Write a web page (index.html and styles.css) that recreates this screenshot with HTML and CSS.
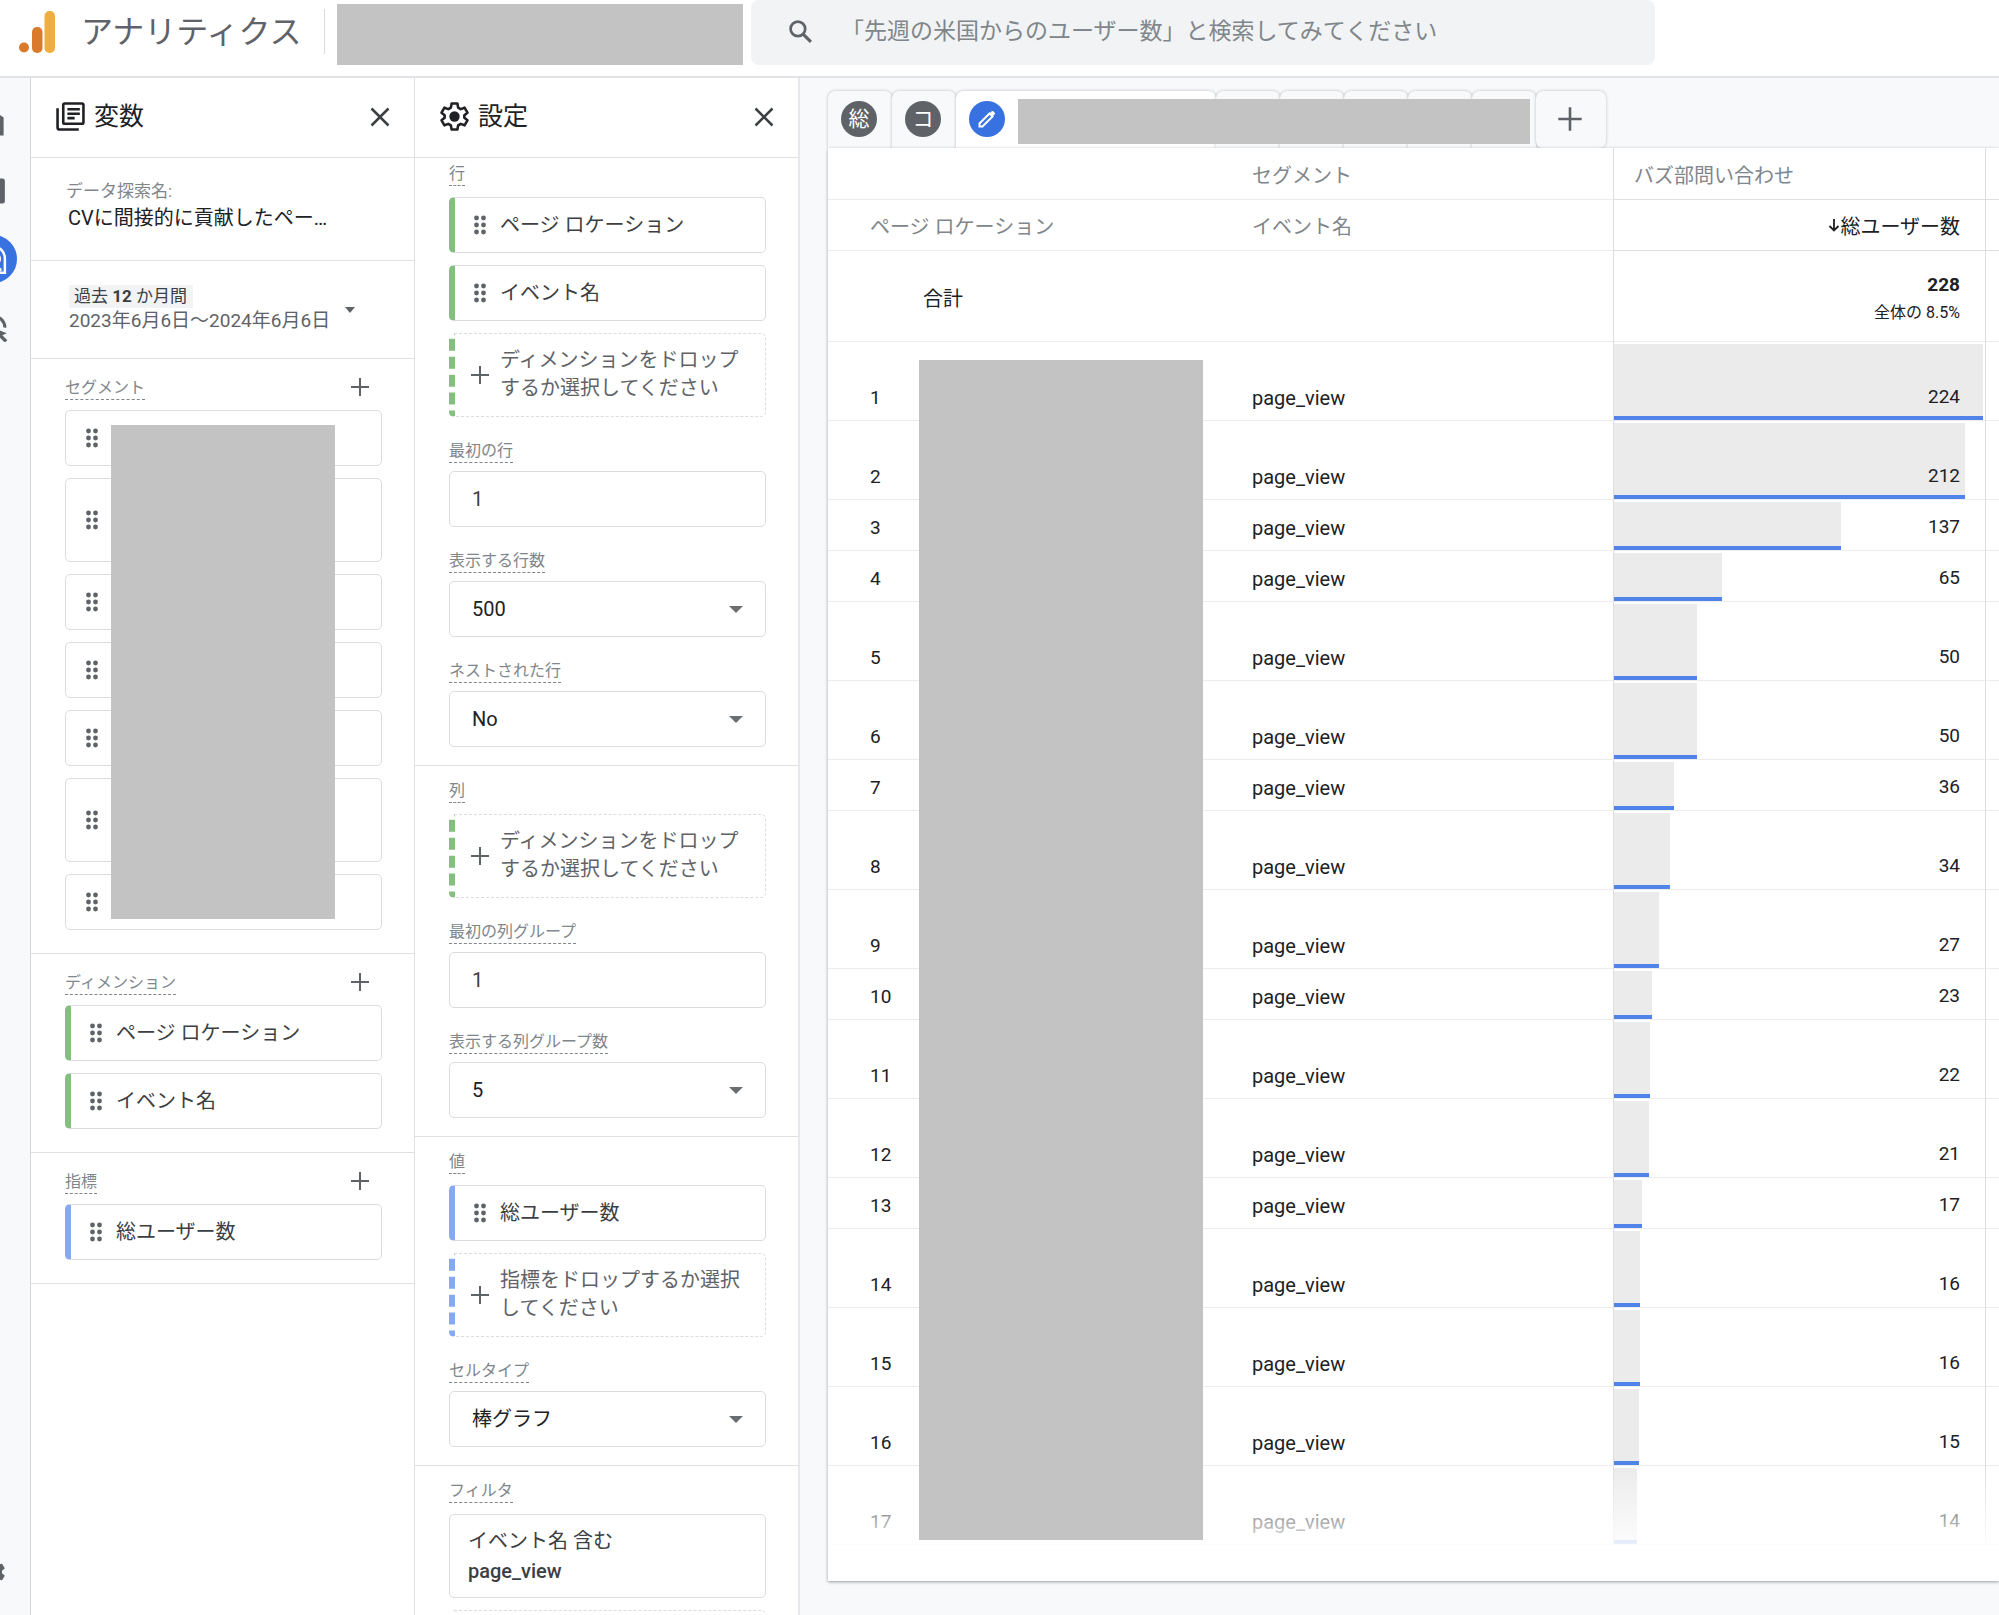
FILE: index.html
```html
<!DOCTYPE html>
<html lang="ja">
<head>
<meta charset="utf-8">
<title>アナリティクス</title>
<link rel="stylesheet" href="styles.css">
</head>
<body>
<svg class="sprite" aria-hidden="true">
  <symbol id="grip" viewBox="0 0 12 20"><g fill="#5f6368"><circle cx="2.5" cy="3" r="2.4"/><circle cx="9.5" cy="3" r="2.4"/><circle cx="2.5" cy="10" r="2.4"/><circle cx="9.5" cy="10" r="2.4"/><circle cx="2.5" cy="17" r="2.4"/><circle cx="9.5" cy="17" r="2.4"/></g></symbol>
  <symbol id="plus" viewBox="0 0 20 20"><path d="M10 1v18M1 10h18" stroke="#5f6368" stroke-width="2" fill="none"/></symbol>
  <symbol id="close" viewBox="0 0 20 20"><path d="M1.500 1.500l17 17M18.500 1.500l-17 17" stroke="#3c4043" stroke-width="2.500" fill="none"/></symbol>
</svg>

<header class="topbar">
  <svg class="logo" viewBox="0 0 36 42" aria-hidden="true"><circle cx="5" cy="36.500" r="5" fill="#d97b2b"/><rect x="13" y="16" width="10.500" height="26" rx="5" fill="#d97b2b"/><rect x="25.500" width="10.500" height="42" rx="5" fill="#efae3f"/></svg>
  <span class="brand">アナリティクス</span>
  <span class="divider"></span>
  <span class="account"></span>
  <label class="search">
    <svg viewBox="0 0 24 24" aria-hidden="true"><circle cx="9.500" cy="9.500" r="7" fill="none" stroke="#5f6368" stroke-width="2.600"/><path d="M14.500 14.500l7.500 7.500" stroke="#5f6368" stroke-width="3"/></svg>
    <input type="text" aria-label="検索" placeholder="「先週の米国からのユーザー数」と検索してみてください">
  </label>
</header>

<div class="workspace">
  <nav class="rail">
    <a href="#" aria-label="ホーム"><svg viewBox="0 0 24 24"><path d="M3 22V8l9-6 8.500 5.500V22h-6v-7h-5v7z"/></svg></a>
    <a href="#" aria-label="レポート"><svg viewBox="0 0 24 24"><rect x="2" y="2" width="19.500" height="20" rx="2"/></svg></a>
    <a href="#" class="current" aria-label="探索"><svg viewBox="0 0 24 24"><path d="M12 2a9.500 9.500 0 0 1 9.500 9.500V23h-4" fill="none" stroke="#fff" stroke-width="2"/><path d="M12 6a6 6 0 0 1 5 8" fill="none" stroke="#fff" stroke-width="2"/><circle cx="17.500" cy="20.500" r="1.500" fill="#fff"/></svg></a>
    <a href="#" aria-label="広告"><svg viewBox="0 0 24 24"><path d="M12 3.500a9 9 0 0 1 9.500 9" fill="none" stroke="#5f6368" stroke-width="2.500"/><path d="M13 13l10 4-3.500 1.500 4 4-2 2-4-4L16 23z"/></svg></a>
    <a href="#" class="admin" aria-label="管理"><svg viewBox="0 0 24 24"><path d="M19.140 12.940c.04-.3.060-.61.060-.94s-.02-.64-.07-.94l2.030-1.580a.49.49 0 0 0 .12-.61l-1.920-3.320a.49.49 0 0 0-.59-.22l-2.390.96a7 7 0 0 0-1.620-.94l-.36-2.540A.48.48 0 0 0 13.920 2h-3.840a.48.48 0 0 0-.47.410l-.36 2.540c-.59.240-1.130.570-1.620.940l-2.390-.96a.48.48 0 0 0-.59.220L2.740 8.870a.48.48 0 0 0 .12.610l2.030 1.580a7 7 0 0 0 0 1.880l-2.030 1.580a.49.49 0 0 0-.12.610l1.920 3.320c.12.220.370.290.590.220l2.390-.96c.5.380 1.030.7 1.620.940l.36 2.540c.05.240.24.410.48.410h3.840c.24 0 .44-.17.470-.41l.36-2.540a7 7 0 0 0 1.620-.94l2.390.96c.22.080.47 0 .59-.22l1.920-3.320a.48.48 0 0 0-.12-.61z"/></svg></a>
  </nav>

  <aside class="panel">
    <div class="panel-head">
      <svg class="head-icon" viewBox="0 0 28 28" aria-hidden="true"><g fill="none" stroke="#202124" stroke-width="2.500"><rect x="7" y="1.500" width="19.500" height="19.500" rx="1.500"/><path d="M1.500 6v18.500a2 2 0 0 0 2 2H22"/><path d="M11 7h12M11 11.300h12M11 15.600h7"/></g></svg>
      <h2>変数</h2>
      <button class="icon-btn" aria-label="変数を閉じる"><svg><use href="#close"/></svg></button>
    </div>
    <div class="name-block">
      <span class="name-label">データ探索名:</span>
      <span class="name-value">CVに間接的に貢献したペー…</span>
    </div>
    <button class="date-block">
      <span><span class="badge">過去 <b>12</b> か月間</span><span class="dates">2023年6月6日～2024年6月6日</span></span>
      <span class="caret"></span>
    </button>
    <section class="group">
      <div class="group-head"><span class="tip">セグメント</span><button class="icon-btn" aria-label="セグメントを追加"><svg><use href="#plus"/></svg></button></div>
      <div class="chips segments">
        <div class="chip"><svg><use href="#grip"/></svg></div>
        <div class="chip tall"><svg><use href="#grip"/></svg></div>
        <div class="chip"><svg><use href="#grip"/></svg></div>
        <div class="chip"><svg><use href="#grip"/></svg></div>
        <div class="chip"><svg><use href="#grip"/></svg></div>
        <div class="chip tall"><svg><use href="#grip"/></svg></div>
        <div class="chip"><svg><use href="#grip"/></svg></div>
        <div class="mask"></div>
      </div>
    </section>
    <section class="group">
      <div class="group-head"><span class="tip">ディメンション</span><button class="icon-btn" aria-label="ディメンションを追加"><svg><use href="#plus"/></svg></button></div>
      <div class="chips">
        <div class="chip dim"><svg><use href="#grip"/></svg>ページ ロケーション</div>
        <div class="chip dim"><svg><use href="#grip"/></svg>イベント名</div>
      </div>
    </section>
    <section class="group">
      <div class="group-head"><span class="tip">指標</span><button class="icon-btn" aria-label="指標を追加"><svg><use href="#plus"/></svg></button></div>
      <div class="chips">
        <div class="chip metric"><svg><use href="#grip"/></svg>総ユーザー数</div>
      </div>
    </section>
  </aside>

  <aside class="panel settings">
    <div class="panel-head">
      <svg class="head-icon" viewBox="0 0 28 28" aria-hidden="true"><path d="M11.200 1.500h5.600l.7 3.900 2.500 1.500 3.700-1.400 2.800 4.800-3 2.500v2.400l3 2.500-2.800 4.800-3.700-1.400-2.500 1.500-.7 3.900h-5.600l-.7-3.900L8 21.100l-3.700 1.400-2.800-4.800 3-2.500v-2.400l-3-2.500 2.800-4.800L8 6.900l2.500-1.500z" fill="none" stroke="#202124" stroke-width="2.500" stroke-linejoin="round"/><circle cx="14" cy="14" r="5" fill="#202124"/></svg>
      <h2>設定</h2>
      <button class="icon-btn" aria-label="設定を閉じる"><svg><use href="#close"/></svg></button>
    </div>
    <section class="group">
      <div class="set-head"><span class="tip">行</span></div>
      <div class="chips">
        <div class="chip dim"><svg><use href="#grip"/></svg>ページ ロケーション</div>
        <div class="chip dim"><svg><use href="#grip"/></svg>イベント名</div>
        <button class="drop dim"><svg><use href="#plus"/></svg><span>ディメンションをドロップするか選択してください</span></button>
      </div>
      <div class="field-label"><label class="tip" for="first-row">最初の行</label></div>
      <input class="box" id="first-row" type="text" value="1">
      <div class="field-label"><label class="tip" for="row-count">表示する行数</label></div>
      <div class="select"><select class="box" id="row-count"><option>500</option></select></div>
      <div class="field-label"><label class="tip" for="nested">ネストされた行</label></div>
      <div class="select"><select class="box" id="nested"><option>No</option></select></div>
    </section>
    <section class="group">
      <div class="set-head"><span class="tip">列</span></div>
      <button class="drop dim"><svg><use href="#plus"/></svg><span>ディメンションをドロップするか選択してください</span></button>
      <div class="field-label"><label class="tip" for="first-col">最初の列グループ</label></div>
      <input class="box" id="first-col" type="text" value="1">
      <div class="field-label"><label class="tip" for="col-count">表示する列グループ数</label></div>
      <div class="select"><select class="box" id="col-count"><option>5</option></select></div>
    </section>
    <section class="group">
      <div class="set-head"><span class="tip">値</span></div>
      <div class="chips">
        <div class="chip metric"><svg><use href="#grip"/></svg>総ユーザー数</div>
        <button class="drop metric"><svg><use href="#plus"/></svg><span>指標をドロップするか選択してください</span></button>
      </div>
      <div class="field-label"><label class="tip" for="cell-type">セルタイプ</label></div>
      <div class="select"><select class="box" id="cell-type"><option>棒グラフ</option></select></div>
    </section>
    <section class="group">
      <div class="set-head"><span class="tip">フィルタ</span></div>
      <div class="chips">
        <button class="filter">イベント名 含む<b>page_view</b></button>
        <button class="drop" aria-label="フィルタを追加"></button>
      </div>
    </section>
  </aside>

  <main class="canvas">
    <div class="tabs">
      <button class="tab"><span class="dot">総</span></button>
      <button class="tab"><span class="dot">コ</span></button>
      <button class="tab active" aria-label="編集中のタブ"><span class="dot"><svg viewBox="0 0 20 20"><path d="M2.500 17.500v-3L12.500 4.500l3 3-10 10z" fill="none" stroke="#fff" stroke-width="2"/><path d="M13 4l1.700-1.700q.8-.8 1.600 0l1.400 1.400q.8.800 0 1.600L16 7z" fill="#fff"/></svg></span></button>
      <button class="tab" aria-label="タブ 4"></button>
      <button class="tab" aria-label="タブ 5"></button>
      <button class="tab" aria-label="タブ 6"></button>
      <button class="tab" aria-label="タブ 7"></button>
      <button class="tab" aria-label="タブ 8"></button>
      <button class="tab add" aria-label="タブを追加"><svg><use href="#plus"/></svg></button>
      <div class="mask"></div>
    </div>
    <div class="report">
      <div class="table-wrap">
        <table>
          <colgroup><col class="c-no"><col class="c-page"><col class="c-event"><col class="c-users"><col></colgroup>
          <thead>
            <tr><th colspan="2"></th><th>セグメント</th><th class="seg">バズ部問い合わせ</th><th class="seg"></th></tr>
            <tr><th colspan="2" class="first">ページ ロケーション</th><th>イベント名</th><th class="seg sorted"><svg viewBox="0 0 12 16" aria-hidden="true"><path d="M6 1v11M1.500 8L6 12.500 10.500 8" fill="none" stroke="#202124" stroke-width="1.800"/></svg>総ユーザー数</th><th class="seg"></th></tr>
          </thead>
          <tbody>
            <tr class="total"><td></td><td>合計</td><td></td><td class="num"><b>228</b><small>全体の 8.5%</small></td><td class="num"></td></tr>
            <tr class="tall"><td>1</td><td></td><td class="event">page_view</td><td class="num"><i style="width:100%"></i><span>224</span></td><td class="num"></td></tr>
            <tr class="tall"><td>2</td><td></td><td class="event">page_view</td><td class="num"><i style="width:94.6%"></i><span>212</span></td><td class="num"></td></tr>
            <tr><td>3</td><td></td><td class="event">page_view</td><td class="num"><i style="width:61.2%"></i><span>137</span></td><td class="num"></td></tr>
            <tr><td>4</td><td></td><td class="event">page_view</td><td class="num"><i style="width:29%"></i><span>65</span></td><td class="num"></td></tr>
            <tr class="tall"><td>5</td><td></td><td class="event">page_view</td><td class="num"><i style="width:22.3%"></i><span>50</span></td><td class="num"></td></tr>
            <tr class="tall"><td>6</td><td></td><td class="event">page_view</td><td class="num"><i style="width:22.3%"></i><span>50</span></td><td class="num"></td></tr>
            <tr><td>7</td><td></td><td class="event">page_view</td><td class="num"><i style="width:16.1%"></i><span>36</span></td><td class="num"></td></tr>
            <tr class="tall"><td>8</td><td></td><td class="event">page_view</td><td class="num"><i style="width:15.2%"></i><span>34</span></td><td class="num"></td></tr>
            <tr class="tall"><td>9</td><td></td><td class="event">page_view</td><td class="num"><i style="width:12.1%"></i><span>27</span></td><td class="num"></td></tr>
            <tr><td>10</td><td></td><td class="event">page_view</td><td class="num"><i style="width:10.3%"></i><span>23</span></td><td class="num"></td></tr>
            <tr class="tall"><td>11</td><td></td><td class="event">page_view</td><td class="num"><i style="width:9.8%"></i><span>22</span></td><td class="num"></td></tr>
            <tr class="tall"><td>12</td><td></td><td class="event">page_view</td><td class="num"><i style="width:9.4%"></i><span>21</span></td><td class="num"></td></tr>
            <tr><td>13</td><td></td><td class="event">page_view</td><td class="num"><i style="width:7.6%"></i><span>17</span></td><td class="num"></td></tr>
            <tr class="tall"><td>14</td><td></td><td class="event">page_view</td><td class="num"><i style="width:7.1%"></i><span>16</span></td><td class="num"></td></tr>
            <tr class="tall"><td>15</td><td></td><td class="event">page_view</td><td class="num"><i style="width:7.1%"></i><span>16</span></td><td class="num"></td></tr>
            <tr class="tall"><td>16</td><td></td><td class="event">page_view</td><td class="num"><i style="width:6.7%"></i><span>15</span></td><td class="num"></td></tr>
            <tr class="tall"><td>17</td><td></td><td class="event">page_view</td><td class="num"><i style="width:6.3%"></i><span>14</span></td><td class="num"></td></tr>
          </tbody>
        </table>
        <div class="fade"></div>
        <div class="mask"></div>
      </div>
    </div>
  </main>
</div>
</body>
</html>
```

FILE: styles.css
```css
* { box-sizing: border-box; }

body {
  margin: 0;
  height: 100vh;
  display: flex;
  flex-direction: column;
  overflow: hidden;
  background: #fff;
  color: #3c4043;
  font: 20px/28px Roboto, "Noto Sans CJK JP", sans-serif;
}

button, input, select { font: inherit; color: inherit; }
button { background: none; border: 0; padding: 0; text-align: left; cursor: pointer; }
.sprite { display: none; }
.mask { position: absolute; background: #c3c3c3; }

/* top bar */
.topbar {
  flex: none;
  height: 78px;
  display: flex;
  align-items: flex-start;
  border-bottom: 2px solid #e1e3e6;
  padding-left: 19px;
}
.logo { width: 36px; height: 42px; margin-top: 11px; }
.brand { margin: 10px 0 0 26px; width: 243px; font-size: 32px; line-height: 44px; color: #5f6368; white-space: nowrap; }
.divider { width: 1px; height: 45px; margin-top: 9px; background: #dadce0; }
.account { width: 406px; height: 61px; margin: 4px 0 0 12px; background: #c3c3c3; }
.search {
  flex: 0 1 904px;
  height: 65px;
  margin-left: 8px;
  padding: 0 24px 2px 37px;
  display: flex;
  align-items: center;
  gap: 28px;
  border-radius: 8px;
  background: #f1f3f4;
}
.search svg { width: 25px; height: 25px; flex: none; }
.search input { flex: 1; min-width: 0; height: 40px; padding: 0; border: 0; outline: 0; background: none; font-size: 23px; }
.search input::placeholder { color: #80868b; opacity: 1; }

.workspace { flex: 1; min-height: 0; display: flex; }

/* left navigation */
.rail {
  flex: none;
  width: 31px;
  padding: 21px 0 19px;
  display: flex;
  flex-direction: column;
  gap: 20px;
  overflow: hidden;
  background: #f8f9fb;
  border-right: 1px solid #d5d8db;
}
.rail a { flex: none; width: 48px; height: 48px; margin-left: -31px; border-radius: 50%; display: flex; align-items: center; justify-content: center; }
.rail svg { width: 30px; height: 30px; fill: #5f6368; }
.rail .current { background: #3871e0; }
.rail .admin { margin-top: auto; }

/* panels */
.panel { flex: none; width: 384px; overflow: hidden; border-right: 1px solid #dfe1e4; }
.panel.settings { width: 385px; border-right: 2px solid #e6e8eb; }
.panel-head { height: 80px; display: flex; align-items: center; padding: 0 24px 2px 25px; border-bottom: 1px solid #e0e0e0; }
.head-icon { width: 29px; height: 29px; }
.panel-head h2 { flex: 1; margin: 0 0 0 9px; font-size: 25px; line-height: 36px; font-weight: 400; color: #202124; }
.icon-btn { width: 20px; height: 20px; display: block; }
.icon-btn svg { width: 20px; height: 20px; display: block; }

.name-block { height: 103px; padding: 21px 34px 0 35px; display: flex; flex-direction: column; border-bottom: 1px solid #e0e0e0; }
.name-label { font-size: 17px; line-height: 24px; color: #80868b; }
.name-value { padding-left: 2px; line-height: 30px; color: #202124; white-space: nowrap; }
.date-block { width: 100%; height: 98px; padding: 0 0 0 38px; display: flex; gap: 15px; align-items: center; border-bottom: 1px solid #e0e0e0; color: #5f6368; }
.badge { display: block; width: 124px; padding-left: 5px; font-size: 17px; line-height: 23px; background: #f1f3f4; color: #3c4043; white-space: nowrap; }
.badge b { font-weight: 700; }
.dates { display: block; font-size: 19px; line-height: 26px; white-space: nowrap; }
.caret { border: 5px solid transparent; border-top: 6px solid #5f6368; border-bottom: 0; }

.group { padding: 0 32px 23px 34px; border-bottom: 1px solid #e0e0e0; }
.group-head { height: 51px; padding-top: 18px; display: flex; justify-content: space-between; align-items: flex-start; }
.group-head .icon-btn { margin-right: 12px; }
.tip { display: inline-block; font-size: 16px; line-height: 22px; color: #80868b; border-bottom: 1px dashed #80868b; }

.chips { display: flex; flex-direction: column; gap: 12px; }
.segments { position: relative; }
.segments .mask { left: 46px; right: 47px; top: 15px; bottom: 11px; }
.chip { height: 56px; display: flex; align-items: center; gap: 14px; padding: 0 20px; border: 1px solid #dadce0; border-radius: 5px; white-space: nowrap; }
.chip svg { width: 12px; height: 20px; flex: none; }
.chip.tall { height: 84px; }
.chip.dim, .chip.metric { padding-left: 19px; border-left-width: 6px; }
.dim { border-left-color: #84bf80 !important; }
.metric { border-left-color: #86a9f2 !important; }

/* settings */
.settings .group { padding-bottom: 18px; }
.set-head { height: 48px; padding-top: 14px; }
.settings .panel-head + .group .set-head { height: 39px; padding-top: 5px; }
.field-label { height: 54px; padding-top: 23px; }
.set-head .tip, .field-label .tip { display: table; }
.drop { width: 100%; height: 84px; display: flex; align-items: center; gap: 10px; padding: 0 15px; border: 1px dashed #dadce0; border-left-width: 6px; border-radius: 5px; color: #5f6368; line-height: 28px; }
.drop svg { width: 20px; height: 20px; flex: none; }
.drop span { width: 242px; padding-bottom: 2px; }
.box { display: block; width: 100%; height: 56px; padding: 0 22px; border: 1px solid #dadce0; border-radius: 5px; background: #fff; outline: 0; }
.select { position: relative; }
.select .box { appearance: none; color: #202124; }
.select::after { content: ""; position: absolute; right: 23px; top: 25px; border: 7px solid transparent; border-top-color: #6b6e71; border-bottom: 0; }
.filter { height: 84px; padding: 0 18px; border: 1px solid #dadce0; border-radius: 5px; line-height: 30px; }
.filter b { display: block; font-weight: 500; }

/* report */
.canvas { flex: 1; min-width: 0; padding: 13px 0 0 28px; background: #f8f9fb; overflow: hidden; }
.tabs { position: relative; display: flex; height: 57px; }
.tab { width: 64px; padding: 0 2px 2px 0; display: flex; align-items: center; justify-content: center; border-radius: 7px 7px 0 0; background: #f8f9fb; box-shadow: 0 0 3px rgba(60, 64, 67, .35); }
.tab.active { width: 260px; justify-content: flex-start; padding-left: 13px; background: #fff; }
.tab.add { width: 70px; border-radius: 7px; }
.tab.add svg { width: 26px; height: 26px; }
.dot { width: 36px; height: 36px; border-radius: 50%; display: flex; align-items: center; justify-content: center; font-size: 21px; color: #fff; background: #5f6368; }
.active .dot { background: #3871e0; }
.dot svg { width: 20px; height: 20px; }
.tabs .mask { left: 190px; top: 8px; width: 512px; height: 45px; }

.report { position: relative; padding-bottom: 26px; background: #fff; box-shadow: 0 1px 3px rgba(60, 64, 67, .5); }
.table-wrap { position: relative; padding-bottom: 10px; }
table { width: 100%; table-layout: fixed; border-collapse: separate; border-spacing: 0; }
.c-no { width: 95px; }
.c-page { width: 329px; }
.c-event { width: 361px; }
.c-users { width: 372px; }
th { height: 51px; padding: 4px 0 0; font-weight: 400; text-align: left; color: #80868b; border-bottom: 1px solid #ececec; white-space: nowrap; }
tr:first-child th { height: 52px; }
th.first { padding-left: 42px; }
th.seg { padding-left: 20px; padding-right: 25px; border-left: 1px solid #dedede; border-bottom-color: #dedede; }
th:last-child, td:last-child { padding: 0; }
th.sorted { text-align: right; color: #202124; }
.sorted svg { width: 12px; height: 16px; }
td { height: 51px; padding: 0 0 8px; vertical-align: bottom; font-size: 19px; color: #202124; border-bottom: 1px solid #ececec; }
td:first-child { padding-left: 42px; }
td.event { font-size: 20px; }
td.num { position: relative; padding: 0 25px 9px 0; text-align: right; border-left: 1px solid #dedede; }
.num span { position: relative; }
.num i { position: absolute; left: 0; top: 2px; bottom: 0; max-width: calc(100% - 2px); background: #ebebeb; border-bottom: 4px solid #5184ea; }
.tall td { height: 79px; }
.total td { height: 91px; vertical-align: middle; padding-top: 5px; padding-bottom: 0; }
.total td:nth-child(2) { font-size: 20px; }
.total b { display: block; font-weight: 700; line-height: 28px; }
.total small { display: block; font-size: 16px; line-height: 28px; }
.fade { position: absolute; left: 0; right: 0; bottom: 0; height: 89px; background: linear-gradient(rgba(255, 255, 255, 0), #fff); }
.table-wrap .mask { left: 91px; top: 212px; width: 284px; bottom: 15px; }
```
